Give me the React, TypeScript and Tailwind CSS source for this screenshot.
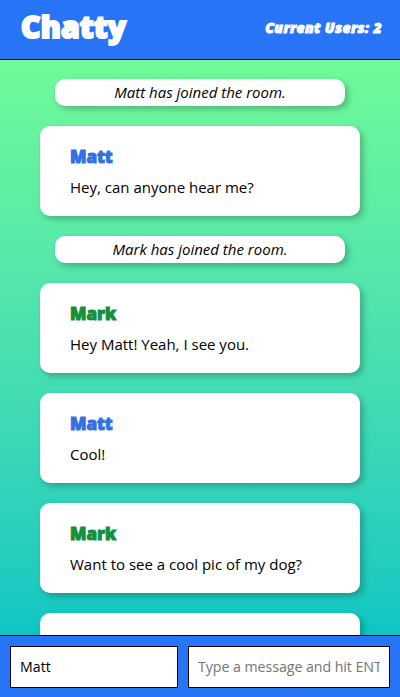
import React from "react";

type Entry =
  | { kind: "notice"; text: string }
  | { kind: "message"; name: string; color: string; text: string };

const entries: Entry[] = [
  { kind: "notice", text: "Matt has joined the room." },
  { kind: "message", name: "Matt", color: "text-[#346fe6]", text: "Hey, can anyone hear me?" },
  { kind: "notice", text: "Mark has joined the room." },
  { kind: "message", name: "Mark", color: "text-[#14903a]", text: "Hey Matt! Yeah, I see you." },
  { kind: "message", name: "Matt", color: "text-[#346fe6]", text: "Cool!" },
  { kind: "message", name: "Mark", color: "text-[#14903a]", text: "Want to see a cool pic of my dog?" },
  { kind: "message", name: "", color: "text-[#346fe6]", text: "" },
];

const display = "font-['Baloo','Open_Sans',sans-serif] font-extrabold";

function Notice({ text }: { text: string }) {
  return (
    <div className="mx-[15px] flex h-[27px] shrink-0 items-center justify-center rounded-[10px] bg-white text-[15px] italic shadow-[3px_3px_6px_rgba(0,0,0,0.25)]">
      {text}
    </div>
  );
}

function Message({ name, color, text }: { name: string; color: string; text: string }) {
  return (
    <article className="h-[90px] shrink-0 rounded-[10px] bg-white px-[30px] pt-[19px] shadow-[3px_3px_6px_rgba(0,0,0,0.25)]">
      <h2 className={`${display} ${color} h-6 text-[17px] leading-6 [-webkit-text-stroke:1px_currentColor]`}>{name}</h2>
      <p className="mt-[7px] text-[15px] leading-[22px]">{text}</p>
    </article>
  );
}

export default function App() {
  return (
    <div className="flex h-[697px] w-full flex-col overflow-hidden bg-[#2874f7] font-['Open_Sans',sans-serif] text-black">
      <header className="flex h-[60px] shrink-0 items-center justify-between border-b border-black pr-[18px] pb-[5px] pl-[21px] text-white">
        <h1 className={`${display} text-[30px] leading-none tracking-[0.2px] [-webkit-text-stroke:2px_currentColor]`}>Chatty</h1>
        <span className={`${display} text-[14px] tracking-[0.38px] italic [-webkit-text-stroke:0.9px_currentColor]`}>Current Users: 2</span>
      </header>
      <main className="flex min-h-0 flex-1 flex-col gap-5 overflow-hidden bg-linear-to-b from-[#70fa98] to-[#0cc6c2] px-10 pt-[19px]">
        {entries.map((e, i) =>
          e.kind === "notice" ? <Notice key={i} text={e.text} /> : <Message key={i} name={e.name} color={e.color} text={e.text} />
        )}
      </main>
      <footer className="flex h-[62px] shrink-0 gap-[10px] border-t border-black px-[10px] pt-[10px]">
        <input className="h-[42px] w-[168px] border border-black bg-white px-[9px] pb-px text-[14.2px] outline-none" defaultValue="Matt" />
        <input className="h-[42px] w-[202px] border border-black bg-white px-[9px] pb-px text-[14.2px] tracking-[-0.05px] outline-none placeholder:text-[#757575]" placeholder="Type a message and hit ENT" />
      </footer>
    </div>
  );
}
